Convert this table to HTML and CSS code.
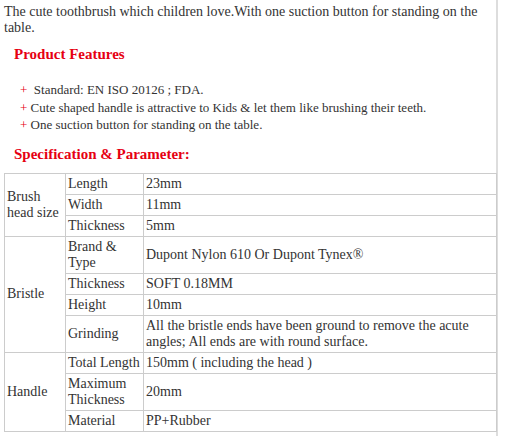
FILE: index.html
```html
<!DOCTYPE html>
<html>
<head>
<meta charset="utf-8">
<link rel="stylesheet" href="styles.css">
</head>
<body>
<div class="page">
  <p class="intro">The cute toothbrush which children love.With one suction button for standing on the table.</p>
  <h3 class="heading">Product Features</h3>
  <ul class="features">
    <li><span class="plus">+</span>&nbsp; Standard: EN ISO 20126 ; FDA.</li>
    <li><span class="plus">+</span> Cute shaped handle is attractive to Kids &amp; let them like brushing their teeth.</li>
    <li><span class="plus">+</span> One suction button for standing on the table.</li>
  </ul>
  <h3 class="heading spec">Specification &amp; Parameter:</h3>
  <table class="spec-table">
    <colgroup><col class="c1"><col class="c2"><col></colgroup>
    <tr><td rowspan="3">Brush head size</td><td>Length</td><td>23mm</td></tr>
    <tr><td>Width</td><td>11mm</td></tr>
    <tr><td>Thickness</td><td>5mm</td></tr>
    <tr><td rowspan="4">Bristle</td><td>Brand &amp; Type</td><td>Dupont Nylon 610 Or Dupont Tynex®</td></tr>
    <tr><td>Thickness</td><td>SOFT 0.18MM</td></tr>
    <tr><td>Height</td><td>10mm</td></tr>
    <tr><td>Grinding</td><td>All the bristle ends have been ground to remove the acute angles; All ends are with round surface.</td></tr>
    <tr><td rowspan="3">Handle</td><td>Total Length</td><td>150mm ( including the head )</td></tr>
    <tr><td>Maximum Thickness</td><td>20mm</td></tr>
    <tr><td>Material</td><td>PP+Rubber</td></tr>
  </table>
</div>
</body>
</html>
```

FILE: styles.css
```css
html, body {
  margin: 0;
  padding: 0;
  background: #fff;
}
body {
  font-family: "Liberation Serif", "Times New Roman", serif;
  color: #333;
}
.page {
  width: 492px;
  padding: 4px 0 0 4px;
  border-right: 2px solid #ddd;
  min-height: 432px;
  box-sizing: content-box;
}
.intro {
  margin: 0;
  font-size: 14px;
  line-height: 16px;
}
.heading {
  color: #e60012;
  font-size: 15px;
  font-weight: bold;
  margin: 9px 0 0 10px;
  line-height: 18px;
}
.features {
  list-style: none;
  margin: 18px 0 0 16px;
  padding: 0;
  font-size: 13px;
  line-height: 17.5px;
}
.plus {
  color: #e60012;
}
.spec {
  margin-top: 11px;
}
.spec-table {
  margin-top: 10px;
  border-collapse: collapse;
  width: 493px;
  font-size: 14px;
}
.spec-table td {
  border: 1px solid #ccc;
  padding: 2px 2px;
  line-height: 16px;
  vertical-align: middle;
}
.c1 { width: 61px; }
.c2 { width: 78px; }
```
